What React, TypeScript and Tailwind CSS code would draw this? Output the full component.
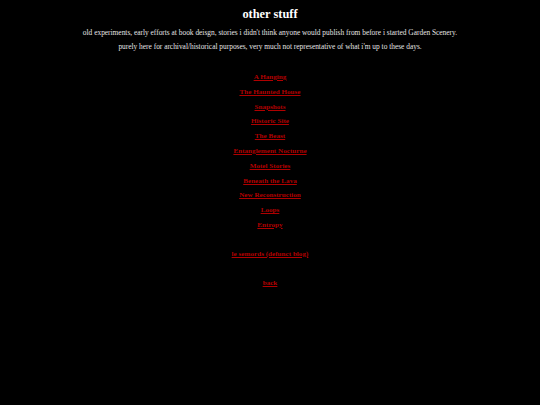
const stories = [
  'A Hanging',
  'The Haunted House',
  'Snapshots',
  'Historic Site',
  'The Beast',
  'Entanglement Nocturne',
  'Motel Stories',
  'Beneath the Lava',
  'New Reconstruction',
  'Loops',
  'Entropy',
];

const linkClass = 'font-bold text-[#b00000] underline decoration-1 underline-offset-1';

export default function App() {
  return (
    <div className="min-h-[405px] bg-black text-[#e4e4e4] font-['Liberation_Serif',Georgia,serif] text-center antialiased">
      <h1 className="pt-[5.5px] text-[12.4px] font-bold leading-[16px] text-white">other stuff</h1>
      <p className="mt-[7.5px] text-[7.4px] leading-[8px]">
        old experiments, early efforts at book deisgn, stories i didn't think anyone would publish from before i started Garden Scenery.
      </p>
      <p className="mt-[6px] text-[7.4px] leading-[8px]">
        purely here for archival/historical purposes, very much not representative of what i'm up to these days.
      </p>

      {/* story links */}
      <div className="mt-[22px] flex flex-col items-center gap-[6.8px] text-[7.15px] leading-[8px]">
        {stories.map(title => (
          <a key={title} href="#" className={linkClass}>
            {title}
          </a>
        ))}
      </div>

      <div className="mt-[21px] text-[7.15px] leading-[8px]">
        <a href="#" className={linkClass}>le semords (defunct blog)</a>
      </div>

      <div className="mt-[21px] text-[7.15px] leading-[8px]">
        <a href="#" className={linkClass}>back</a>
      </div>
    </div>
  );
}
